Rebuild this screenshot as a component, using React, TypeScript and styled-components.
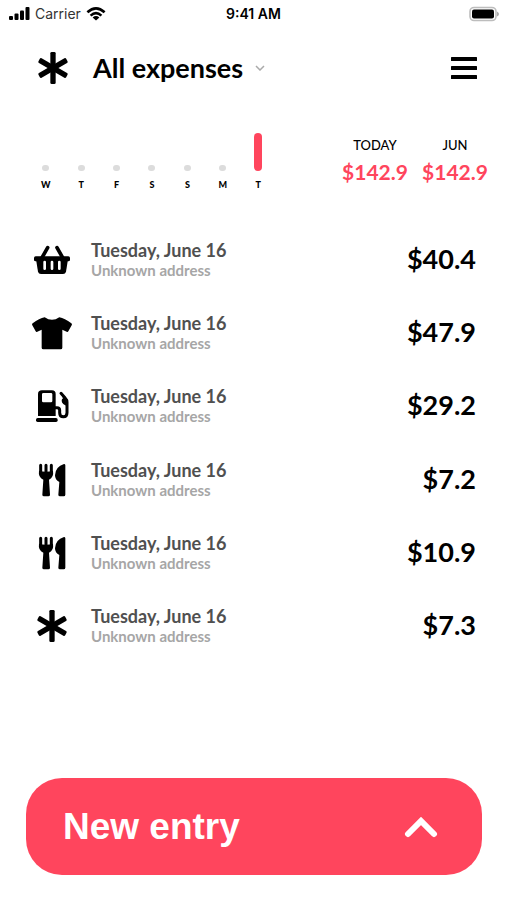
import React from "react";
import styled, { createGlobalStyle } from "styled-components";

const ACCENT = "#ff455d";

const GlobalStyle = createGlobalStyle`
  * { box-sizing: border-box; }
  body {
    margin: 0;
    background: #fff;
    color: #000;
    font-family: Lato, "Open Sans", sans-serif;
  }
  button {
    border: 0;
    padding: 0;
    background: none;
    color: inherit;
    font: inherit;
    cursor: pointer;
  }
  svg { display: block; flex: none; }
`;

const Screen = styled.div`
  display: flex;
  flex-direction: column;
  min-height: 100vh;
`;

const StatusBar = styled.div`
  display: grid;
  grid-template-columns: 1fr auto 1fr;
  align-items: center;
  height: 28px;
  padding: 0 8px;
  font-family: Inter, sans-serif;
  font-size: 14px;
  line-height: 20px;
`;

const StatusLeft = styled.div`
  display: flex;
  align-items: center;
  gap: 4px;
  color: #333;
`;

const StatusTime = styled.div`
  font-weight: 600;
`;

const StatusRight = styled.div`
  display: flex;
  justify-content: flex-end;
`;

const Header = styled.header`
  display: flex;
  align-items: center;
  height: 80px;
  padding: 0 30px 0 33px;
`;

const FilterButton = styled.button`
  display: flex;
  align-items: center;
  gap: 12px;
  margin-left: 20px;
  font-size: 27px;
  font-weight: 700;
  line-height: 36px;
`;

const MenuButton = styled.button`
  margin-left: auto;
`;

const Summary = styled.section`
  display: flex;
  justify-content: space-between;
  padding: 25px 13px 0 28px;
`;

const Week = styled.div`
  display: grid;
  grid-template-columns: repeat(7, 1fr);
  flex: 0 1 248px;
`;

const Day = styled.div`
  display: flex;
  flex-direction: column;
  align-items: center;
  justify-content: flex-end;
  height: 58px;
  gap: 8px;
  font-size: 9px;
  font-weight: 900;
  line-height: 12px;
`;

const DayBar = styled.div<{ $active: boolean }>`
  width: ${(p) => (p.$active ? "8px" : "7px")};
  height: ${(p) => (p.$active ? "38px" : "6px")};
  border-radius: 4px;
  background: ${(p) => (p.$active ? ACCENT : "#dcdcdc")};
`;

const Totals = styled.div`
  display: flex;
  gap: 2px;
`;

const Total = styled.div`
  display: flex;
  flex-direction: column;
  align-items: center;
  width: 78px;
  padding-top: 3px;
`;

const TotalLabel = styled.div`
  font-size: 13px;
  font-weight: 500;
  line-height: 18px;
`;

const TotalAmount = styled.div`
  color: ${ACCENT};
  font-size: 21px;
  font-weight: 700;
  line-height: 36px;
`;

const ExpenseList = styled.ul`
  display: grid;
  grid-auto-rows: 1fr;
  min-height: 440px;
  margin: 32px 0 0;
  padding: 0 31px 0 32px;
  list-style: none;
`;

const ExpenseRow = styled.li`
  display: flex;
  align-items: center;
`;

const Details = styled.div`
  flex: 1;
  margin-left: 19px;
`;

const ExpenseDate = styled.div`
  color: #505050;
  font-size: 18px;
  font-weight: 700;
  line-height: 20px;
`;

const ExpenseAddress = styled.div`
  color: #a6a6a6;
  font-size: 15px;
  font-weight: 700;
  line-height: 20px;
`;

const Amount = styled.div`
  padding-bottom: 2px;
  font-size: 27px;
  font-weight: 700;
  line-height: 36px;
`;

const Footer = styled.footer`
  margin-top: auto;
  padding: 24px 25px 25px 26px;
`;

const NewEntry = styled.button`
  display: flex;
  align-items: center;
  justify-content: space-between;
  width: 100%;
  height: 97px;
  padding: 0 44px 0 37px;
  border-radius: 36px;
  background: ${ACCENT};
  color: #fff;
  font-family: "Liberation Sans", Arial, sans-serif;
  font-size: 37px;
  font-weight: 700;
  line-height: 44px;
`;

const Glyph = ({ children }: { children: React.ReactNode }) => (
  <svg width="40" height="36" viewBox="0 0 120 108" aria-hidden="true">
    {children}
  </svg>
);

const Asterisk = () => (
  <Glyph>
    {[0, 60, 120].map((angle) => (
      <rect key={angle} x="52" y="6" width="16" height="96" rx="4" transform={`rotate(${angle} 60 54)`} />
    ))}
  </Glyph>
);

const Basket = () => (
  <Glyph>
    <path d="M47 17 30 47M75 17 92 47" stroke="#000" strokeWidth="11" strokeLinecap="round" />
    <rect x="6" y="43" width="108" height="15" rx="5" />
    <path d="M12 52H108L102 89Q100 96 93 96H27Q20 96 18 89Z" />
    <path d="M38 60V80M60 60V80M82 60V80" stroke="#fff" strokeWidth="8" strokeLinecap="round" />
  </Glyph>
);

const Shirt = () => (
  <Glyph>
    <path d="M38 7Q60 22 82 7Q98 10 118 25Q121 28 119 31L109 49Q107 52 104 50L91 44V98Q91 103 86 103H34Q29 103 29 98V44L16 50Q13 52 11 49L1 31Q-1 28 2 25Q22 10 38 7Z" />
  </Glyph>
);

const Pump = () => (
  <Glyph>
    <path
      fillRule="evenodd"
      d="M30 7H60Q71 7 71 18V84H18V18Q18 7 30 7ZM34 15Q30 15 30 19V39Q30 43 34 43H57Q61 43 61 39V19Q61 15 57 15Z"
    />
    <rect x="12" y="90" width="65" height="12" rx="5" />
    <path
      d="M70 59H75Q83 59 83 67V74Q83 86 94 86Q105 86 105 74V43Q105 36 100 31L87 16"
      fill="none"
      stroke="#000"
      strokeWidth="9"
      strokeLinecap="round"
    />
    <path d="M88 19 108 36V54Q89 50 89 38Q89 34 93 31Z" />
  </Glyph>
);

const Cutlery = () => (
  <Glyph>
    <path d="M26 10V32M42 10V32M58 10V32" stroke="#000" strokeWidth="9" strokeLinecap="round" />
    <path d="M21 26Q42 32 63 26Q66 46 51 53L54 98Q54 103 49 103H36Q31 103 31 98L34 53Q18 46 21 26Z" />
    <path d="M96 6Q100 6 100 10V98Q100 103 95 103H84Q79 103 79 98L82 60Q69 54 69 40Q70 14 96 6Z" />
  </Glyph>
);

const icons = { basket: Basket, shirt: Shirt, pump: Pump, cutlery: Cutlery, other: Asterisk };

const expenses: { icon: keyof typeof icons; amount: string }[] = [
  { icon: "basket", amount: "$40.4" },
  { icon: "shirt", amount: "$47.9" },
  { icon: "pump", amount: "$29.2" },
  { icon: "cutlery", amount: "$7.2" },
  { icon: "cutlery", amount: "$10.9" },
  { icon: "other", amount: "$7.3" },
];

const days = ["W", "T", "F", "S", "S", "M", "T"];

const totals = [
  { label: "TODAY", amount: "$142.9" },
  { label: "JUN", amount: "$142.9" },
];

const Signal = () => (
  <svg width="23" height="14" viewBox="0 0 23 14" aria-hidden="true">
    <rect x="1" y="9" width="4" height="4" rx="1" />
    <rect x="6.5" y="6.5" width="4" height="6.5" rx="1" />
    <rect x="12" y="3.5" width="4" height="9.5" rx="1" />
    <rect x="17.5" y="0" width="4" height="13" rx="1" />
  </svg>
);

const Wifi = () => (
  <svg width="22" height="16" viewBox="0 0 22 16" fill="none" stroke="#000" strokeWidth="2.6" aria-hidden="true">
    <path d="M2.4 6.2Q11 -1.6 19.6 6.2M5.6 9.6Q11 4.8 16.4 9.6" />
    <path d="M11 14.6 7.6 11.4Q11 8.8 14.4 11.4Z" fill="#000" stroke="none" />
  </svg>
);

const Battery = () => (
  <svg width="31" height="16" viewBox="0 0 31 16" aria-hidden="true">
    <rect x="2" y="1.5" width="26" height="13" rx="4" fill="#fff" stroke="#bdbdbd" strokeWidth="1.6" />
    <rect x="4" y="3.5" width="22" height="9" rx="2" />
    <path d="M29 5.5Q31 6.5 31 8T29 10.5Z" fill="#aaa" />
  </svg>
);

export default function App() {
  return (
    <>
      <GlobalStyle />
      <Screen>
        <StatusBar>
          <StatusLeft>
            <Signal />
            <span>Carrier</span>
            <Wifi />
          </StatusLeft>
          <StatusTime>9:41 AM</StatusTime>
          <StatusRight>
            <Battery />
          </StatusRight>
        </StatusBar>
        <Header>
          <Asterisk />
          <FilterButton type="button" aria-haspopup="listbox">
            All expenses
            <svg width="10" height="6" viewBox="0 0 10 6" fill="none" stroke="#aaa" strokeWidth="1.5" aria-hidden="true">
              <path d="M1 1 5 5 9 1" />
            </svg>
          </FilterButton>
          <MenuButton type="button" aria-label="Menu">
            <svg width="26" height="24" viewBox="0 0 26 24" aria-hidden="true">
              <rect y="1" width="26" height="4" rx="0.5" />
              <rect y="10" width="26" height="4" rx="0.5" />
              <rect y="19" width="26" height="4" rx="0.5" />
            </svg>
          </MenuButton>
        </Header>
        <Summary>
          <Week>
            {days.map((day, i) => (
              <Day key={i}>
                <DayBar $active={i === days.length - 1} />
                {day}
              </Day>
            ))}
          </Week>
          <Totals>
            {totals.map((t) => (
              <Total key={t.label}>
                <TotalLabel>{t.label}</TotalLabel>
                <TotalAmount>{t.amount}</TotalAmount>
              </Total>
            ))}
          </Totals>
        </Summary>
        <ExpenseList>
          {expenses.map((e, i) => {
            const Icon = icons[e.icon];
            return (
              <ExpenseRow key={i}>
                <Icon />
                <Details>
                  <ExpenseDate>Tuesday, June 16</ExpenseDate>
                  <ExpenseAddress>Unknown address</ExpenseAddress>
                </Details>
                <Amount>{e.amount}</Amount>
              </ExpenseRow>
            );
          })}
        </ExpenseList>
        <Footer>
          <NewEntry type="button">
            New entry
            <svg width="34" height="22" viewBox="0 0 34 22" fill="none" stroke="#fff" strokeWidth="6" strokeLinecap="round" aria-hidden="true">
              <path d="M4 18 17 5 30 18" />
            </svg>
          </NewEntry>
        </Footer>
      </Screen>
    </>
  );
}
